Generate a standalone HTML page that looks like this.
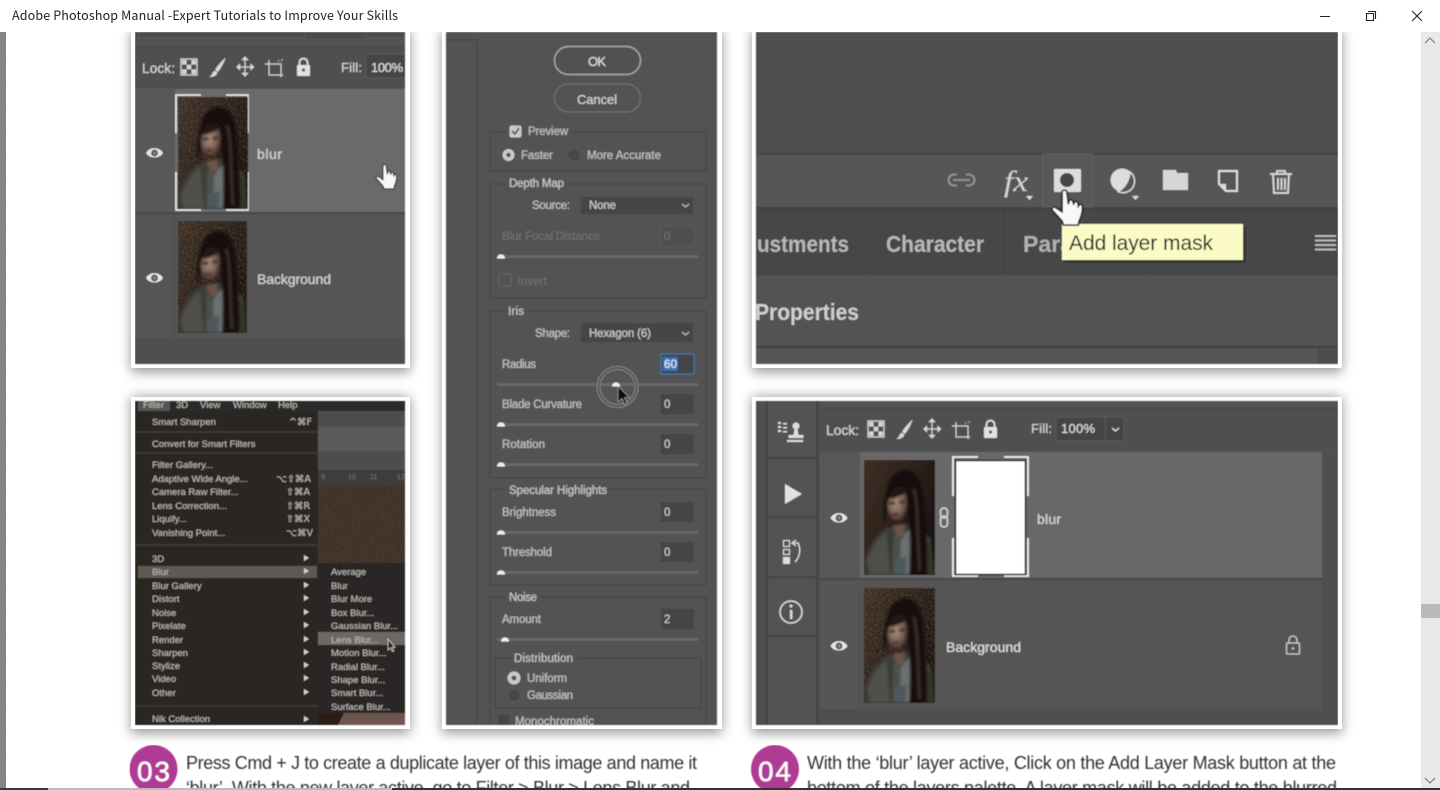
<!DOCTYPE html>
<html><head><meta charset="utf-8"><title>Adobe Photoshop Manual</title>
<style>html,body{margin:0;padding:0;background:#fff;overflow:hidden}svg{display:block}
text{font-family:"Liberation Sans",sans-serif}
.w{fill:#d2d2d2;font-size:14px;stroke:#d2d2d2;stroke-width:.25}.s{fill:#bdbdbd;font-size:11.5px;stroke:#bdbdbd;stroke-width:.3}.d{fill:#707070;font-size:11.5px;stroke:#707070;stroke-width:.25}
.m{fill:#bdb8b2;font-size:9.5px;stroke:#bdb8b2;stroke-width:.12}.c{fill:#333;font-size:18px}
</style></head><body>
<svg xmlns="http://www.w3.org/2000/svg" width="1440" height="790" viewBox="0 0 1440 790">
<defs>
<filter id="sh" x="-20%" y="-20%" width="140%" height="140%"><feGaussianBlur stdDeviation="6"/></filter>
<filter id="b" x="0" y="0" width="100%" height="100%"><feGaussianBlur stdDeviation="0.5"/></filter>
<filter id="pb" x="-10%" y="-10%" width="120%" height="120%"><feGaussianBlur stdDeviation="1.4"/></filter>
<filter id="noise" x="0" y="0" width="100%" height="100%"><feTurbulence type="fractalNoise" baseFrequency="0.6" numOctaves="2" seed="4"/><feColorMatrix values="0 0 0 0 .42  0 0 0 0 .34  0 0 0 0 .26  1.8 0 0 0 -.85"/></filter>
<pattern id="hatch" width="3" height="3" patternUnits="userSpaceOnUse"><rect width="3" height="3" fill="#8e8e8e"/><path d="M0 3L3 0" stroke="#777" stroke-width="1"/></pattern>
<clipPath id="c1"><rect x="135" y="32" width="270" height="332"/></clipPath>
<clipPath id="c2"><rect x="135" y="401" width="270" height="324"/></clipPath>
<clipPath id="c3"><rect x="446" y="32" width="271" height="693"/></clipPath>
<clipPath id="c4"><rect x="756" y="32" width="582" height="332"/></clipPath>
<clipPath id="c5"><rect x="756" y="401" width="582" height="324"/></clipPath>
<clipPath id="tc"><rect x="0" y="0" width="70" height="112"/></clipPath>
<linearGradient id="bgg" x1="0" y1="0" x2="1" y2="0.7"><stop offset="0" stop-color="#3f3025"/><stop offset=".6" stop-color="#2a1f19"/><stop offset="1" stop-color="#191210"/></linearGradient>
<radialGradient id="face" cx=".42" cy=".42" r=".62"><stop offset="0" stop-color="#ad9082"/><stop offset=".6" stop-color="#7c6256"/><stop offset="1" stop-color="#3e2d27"/></radialGradient>
<g id="fig"><g filter="url(#pb)">
<path d="M0 98C4 84 12 72 22 66L46 62 66 76 70 112H0z" fill="#3b3a36"/>
<path d="M3 98C8 86 14 76 22 70L26 112H6z" fill="#4f4f49"/>
<path d="M28 64L40 62 40 74 33 76z" fill="#6a5348"/>
<path d="M29 72L38 80 40 112H28z" fill="#4a4f4e"/>
<path d="M36 78L46 66 48 86 44 112H36z" fill="#6a7170"/>
<path d="M30 98L42 94 41 112H30z" fill="#4d585c"/>
<path d="M56 78L66 82 70 112H58z" fill="#36302c"/>
<path d="M22 32C24 16 33 9 43 10 54 12 58 24 59 40 60 60 63 80 62 112H45C45 92 46 76 44 60L42 34 24 46 20 62C18 50 20 40 22 32z" fill="#181010"/>
<path d="M49 28C54 44 52 72 55 108" stroke="#3e2d2a" stroke-width="2.500" fill="none"/>
<path d="M24 40C27 28 37 26 41 31 44 40 43 51 37 58 31 61 26 57 24 50 23 47 23 43 24 40z" fill="url(#face)"/>
<path d="M24 37C28 26 37 22 42 30L38 34 28 38z" fill="#231816"/>
<ellipse cx="28" cy="42" rx="3.500" ry="1.600" fill="#281b18"/><ellipse cx="37" cy="41" rx="3" ry="1.600" fill="#281b18"/>
<ellipse cx="31" cy="53" rx="4" ry="1.700" fill="#5f2f2e"/>
</g></g>
<g id="port" clip-path="url(#tc)"><rect width="70" height="112" fill="url(#bgg)"/><use href="#fig"/></g>
<g id="portn" clip-path="url(#tc)"><rect width="70" height="112" fill="url(#bgg)"/><rect width="70" height="112" filter="url(#noise)" opacity=".5"/><use href="#fig"/><rect width="70" height="112" filter="url(#noise)" opacity=".12"/></g>
<g id="eye"><path d="M-8.5 0C-5 -6.5 5 -6.5 8.5 0 5 6 -5 6 -8.5 0z" fill="#e6e6e6"/><circle r="3.4" fill="#4a4a4a"/><circle r="1.6" fill="#8a8a8a"/></g>
<path id="hand" d="M8 3c0-2 3-2 3.3 0l1 8.5.3-2c.4-1.5 2.7-1.3 2.8.3l.3 2 .4-1.3c.5-1.3 2.5-1 2.6.5l.2 2 .5-.8c.6-1 2.3-.5 2.3 1 0 4-.6 7-2.3 10.3l-.5 3H9l-1-3L1.6 16c-1-1.3.5-3 2-2.2L8 17z" fill="#f8f8f8" stroke="#1d1d1d" stroke-width="1.1"/>
<g id="lockrow">
<g fill="#d4d4d4"><rect x="0" y="0" width="16" height="16" fill="none" stroke="#d4d4d4" stroke-width="1.3"/><rect x="1" y="1" width="4.6" height="4.6"/><rect x="10.4" y="1" width="4.6" height="4.6"/><rect x="5.7" y="5.7" width="4.6" height="4.6"/><rect x="1" y="10.4" width="4.6" height="4.6"/><rect x="10.4" y="10.4" width="4.6" height="4.6"/></g>
<path d="M44 -1C40 3 36 7 34 11L37 13C40 9 43 4 44.5 -1z" fill="#d8d8d8"/><path d="M33 12C35 12 37 13 36 15 34 18 30 18 28 18 31 17 31 14 33 12z" fill="#d8d8d8"/>
<path d="M64 -2V17M56.5 8H72M64 -2l-2.4 2.6h4.8zM64 17l-2.4-2.6h4.8zM56 8l2.6-2.4v4.8zM72.5 8l-2.6-2.4v4.8z" stroke="#d4d4d4" stroke-width="1.2" fill="#d4d4d4"/>
<path d="M88 1V16H102M84 5H100V18" stroke="#d4d4d4" stroke-width="1.2" fill="none"/><path d="M100 2l2-2M97 3l1-2" stroke="#aaa"/>
<rect x="116" y="6" width="13" height="11" rx="1" fill="#e2e2e2"/><path d="M118.5 6V3.5a4 4 0 0 1 8 0V6" stroke="#e2e2e2" stroke-width="1.8" fill="none"/><circle cx="122.5" cy="11" r="1.6" fill="#555"/>
</g>
<g id="knob"><path d="M-4 2.5C-4 -3 4 -3 4 2.5z" fill="#eee"/></g>
</defs>

<rect width="1440" height="790" fill="#fff"/>

<g fill="#000" opacity=".42" filter="url(#sh)">
<rect x="131" y="30" width="279" height="342"/><rect x="131" y="397" width="279" height="336"/>
<rect x="442" y="30" width="280" height="703"/><rect x="752" y="30" width="590" height="342"/><rect x="752" y="397" width="590" height="336"/>
</g>
<g fill="#fff">
<rect x="131" y="30" width="279" height="338"/><rect x="131" y="397" width="279" height="332"/>
<rect x="442" y="30" width="280" height="699"/><rect x="752" y="30" width="590" height="338"/><rect x="752" y="397" width="590" height="332"/>
</g>

<g filter="url(#b)">
<!-- PANEL 1 -->
<g clip-path="url(#c1)">
<rect x="135" y="32" width="270" height="332" fill="#535353"/>
<rect x="135" y="32" width="270" height="6" fill="#4b4b4b"/>
<path d="M139 32v6h165l2-6M366 32v6h40" fill="none" stroke="#5a5a5a"/>
<rect x="135" y="46" width="270" height="1.5" fill="#454545"/>
<rect x="135" y="47" width="270" height="41" fill="#4f4f4f"/>
<text class="w" x="142" y="73" textLength="33" style="font-size:13.5px">Lock:</text>
<use href="#lockrow" transform="translate(181,59)"/>
<text class="w" x="341" y="72" textLength="21" style="font-size:13px">Fill:</text>
<rect x="366" y="54" width="44" height="24" rx="2" fill="#444" stroke="#5c5c5c"/>
<text class="w" x="371" y="72" textLength="32" style="fill:#ddd;font-size:13px">100%</text>
<rect x="135" y="89" width="40" height="123" fill="#585858"/>
<rect x="175" y="89" width="230" height="123" fill="#6a6a6a"/>
<rect x="135" y="212" width="270" height="2" fill="#474747"/>
<rect x="135" y="214" width="40" height="124" fill="#555"/><rect x="174" y="214" width="1" height="124" fill="#4c4c4c"/>
<rect x="175" y="214" width="230" height="124" fill="#545454"/>
<rect x="135" y="338" width="270" height="26" fill="#4f4f4f"/>
<use href="#eye" transform="translate(154.5,153)"/><use href="#eye" transform="translate(154.5,278)"/>
<path d="M176 133V95H201M226 95H248V133M248 172V210H226M201 210H176V172" fill="none" stroke="#f2f2f2" stroke-width="1.6"/>
<use href="#portn" transform="translate(178,97)"/>
<use href="#portn" transform="translate(178,221) scale(.985,1)"/>
<text class="w" x="257" y="159" textLength="25">blur</text>
<text class="w" x="257" y="284" textLength="74">Background</text>
<use href="#hand" transform="translate(375,163) scale(1,.98)"/>
</g>

<!-- PANEL 2 -->
<g clip-path="url(#c2)">
<rect x="135" y="401" width="270" height="324" fill="#2a2522"/>
<rect x="135" y="401" width="270" height="10" fill="#2a2a2a"/>
<rect x="138" y="401" width="32" height="10" fill="#555"/>
<text class="m" x="143" y="408">Filter</text><text class="m" x="176" y="408">3D</text><text class="m" x="200" y="408">View</text><text class="m" x="233" y="408">Window</text><text class="m" x="278" y="408">Help</text>
<rect x="318" y="411" width="87" height="16" fill="#4e4e4e"/><rect x="318" y="427" width="87" height="24" fill="#5a5a5a"/><rect x="318" y="451" width="87" height="19" fill="#4e4e4e"/>
<rect x="318" y="470" width="87" height="15" fill="#3c3c3c"/>
<rect x="318" y="485" width="87" height="78" fill="#3f3128"/><rect x="318" y="485" width="87" height="78" filter="url(#noise)" opacity=".3"/>
<text x="321" y="479" fill="#777" font-size="7">9</text><text x="348" y="479" fill="#777" font-size="7">10</text><text x="370" y="479" fill="#777" font-size="7">11</text><text x="397" y="479" fill="#777" font-size="7">12</text>
<rect x="318" y="563" width="87" height="150" fill="#2c2725"/>
<rect x="318" y="713" width="87" height="12" fill="#6d574d"/><path d="M318 713h26l-6 12h-20z" fill="#2a1c19"/>
<rect x="135" y="431" width="183" height="2" fill="#3d3936"/><rect x="135" y="452" width="183" height="2" fill="#3d3936"/><rect x="135" y="544" width="183" height="2" fill="#3d3936"/><rect x="135" y="705" width="183" height="2" fill="#3d3936"/>
<rect x="138" y="566" width="179" height="12" fill="#5f5853"/>
<rect x="318" y="632" width="87" height="13" fill="#6e6864"/>
<text class="m" x="152" y="425">Smart Sharpen</text><text class="m" x="289" y="425" style="font-family:'DejaVu Sans',sans-serif">^⌘F</text>
<text class="m" x="152" y="447">Convert for Smart Filters</text>
<text class="m" x="152" y="468">Filter Gallery...</text>
<text class="m" x="152" y="482">Adaptive Wide Angle...</text><text class="m" x="276" y="482" style="font-family:'DejaVu Sans',sans-serif">⌥⇧⌘A</text>
<text class="m" x="152" y="495">Camera Raw Filter...</text><text class="m" x="286" y="495" style="font-family:'DejaVu Sans',sans-serif">⇧⌘A</text>
<text class="m" x="152" y="509">Lens Correction...</text><text class="m" x="286" y="509" style="font-family:'DejaVu Sans',sans-serif">⇧⌘R</text>
<text class="m" x="152" y="522">Liquify...</text><text class="m" x="286" y="522" style="font-family:'DejaVu Sans',sans-serif">⇧⌘X</text>
<text class="m" x="152" y="536">Vanishing Point...</text><text class="m" x="286" y="536" style="font-family:'DejaVu Sans',sans-serif">⌥⌘V</text>
<text class="m" x="152" y="562">3D</text><text class="m" x="152" y="575">Blur</text><text class="m" x="152" y="589">Blur Gallery</text><text class="m" x="152" y="602">Distort</text><text class="m" x="152" y="616">Noise</text><text class="m" x="152" y="629">Pixelate</text><text class="m" x="152" y="643">Render</text><text class="m" x="152" y="656">Sharpen</text><text class="m" x="152" y="669">Stylize</text><text class="m" x="152" y="682">Video</text><text class="m" x="152" y="696">Other</text><text class="m" x="152" y="722">Nik Collection</text>
<path fill="#d5d0cb" d="M304 555l5 3-5 3zM304 568l5 3-5 3zM304 582l5 3-5 3zM304 595l5 3-5 3zM304 609l5 3-5 3zM304 622l5 3-5 3zM304 636l5 3-5 3zM304 649l5 3-5 3zM304 662l5 3-5 3zM304 675l5 3-5 3zM304 689l5 3-5 3zM304 716l5 3-5 3z"/>
<text class="m" x="331" y="575">Average</text><text class="m" x="331" y="589">Blur</text><text class="m" x="331" y="602">Blur More</text><text class="m" x="331" y="616">Box Blur...</text><text class="m" x="331" y="629">Gaussian Blur...</text><text class="m" x="331" y="643">Lens Blur...</text><text class="m" x="331" y="656">Motion Blur...</text><text class="m" x="331" y="670">Radial Blur...</text><text class="m" x="331" y="683">Shape Blur...</text><text class="m" x="331" y="696">Smart Blur...</text><text class="m" x="331" y="710">Surface Blur...</text>
<path d="M388 639v11l2.5-2 2 3.5 1.5-.8-2-3.4h3z" fill="#222" stroke="#ddd" stroke-width=".7"/>
</g>

<!-- PANEL 3 -->
<g clip-path="url(#c3)">
<rect x="446" y="32" width="271" height="693" fill="#525252"/>
<path d="M446 40H477V725" fill="none" stroke="#484848" stroke-width="1.5"/>
<rect x="554.5" y="46.5" width="86" height="28" rx="14" fill="#515151" stroke="#aaa" stroke-width="1.4"/>
<text class="w" x="588" y="66" textLength="18" style="font-size:13px;fill:#ddd">OK</text>
<rect x="554.5" y="84" width="86" height="28" rx="14" fill="none" stroke="#6e6e6e" stroke-width="1.4"/>
<text class="w" x="577" y="104" textLength="40" style="font-size:13px;fill:#d0d0d0">Cancel</text>
<g fill="none" stroke="#474747" stroke-width="1.2">
<rect x="490" y="132" width="216" height="39"/><rect x="490" y="184" width="216" height="114"/><rect x="490" y="311" width="216" height="167"/><rect x="490" y="489" width="216" height="96"/><rect x="490" y="597" width="216" height="130"/><rect x="495" y="658" width="206" height="50"/>
</g>
<g fill="#525252"><rect x="506" y="128" width="66" height="8"/><rect x="506" y="180" width="62" height="8"/><rect x="506" y="307" width="24" height="8"/><rect x="506" y="485" width="104" height="8"/><rect x="506" y="593" width="34" height="8"/><rect x="512" y="654" width="66" height="8"/></g>
<rect x="509.500" y="125.500" width="12" height="12" rx="2" fill="#c9c9c9"/><path d="M512 131l3 3 4-6" stroke="#555" stroke-width="1.6" fill="none"/>
<text class="s" x="528" y="135" textLength="40">Preview</text>
<circle cx="508.500" cy="155" r="6" fill="#c9c9c9"/><circle cx="508.500" cy="155" r="2.2" fill="#555"/>
<text class="s" x="521" y="159" textLength="32">Faster</text>
<circle cx="574" cy="155" r="6.500" fill="#474747" stroke="#5c5c5c"/>
<text class="s" x="587" y="159" textLength="74">More Accurate</text>
<text class="s" x="509" y="187" textLength="55" style="fill:#c9c9c9">Depth Map</text>
<text class="s" x="532" y="209" textLength="38">Source:</text>
<rect x="581" y="197" width="112" height="17" fill="#444"/><text class="s" x="589" y="209" textLength="27" style="fill:#ccc">None</text><path d="M682 204l3.500 3 3.500-3" stroke="#bbb" fill="none" stroke-width="1.2"/>
<text class="d" x="502" y="240" textLength="98">Blur Focal Distance</text>
<rect x="661" y="226" width="33" height="20" fill="#505050" stroke="#5a5a5a"/><text class="d" x="664" y="240">0</text>
<rect x="499" y="274" width="12" height="12" rx="2" fill="none" stroke="#666"/><text class="d" x="517" y="285" textLength="30">Invert</text>
<text class="s" x="508" y="315" textLength="16" style="fill:#c9c9c9">Iris</text>
<text class="s" x="535" y="337" textLength="35">Shape:</text>
<rect x="581" y="323" width="112" height="19" fill="#444"/><text class="s" x="589" y="337" textLength="62" style="fill:#ccc">Hexagon (6)</text><path d="M682 332l3.500 3 3.500-3" stroke="#bbb" fill="none" stroke-width="1.2"/>
<text class="s" x="502" y="368" textLength="34">Radius</text>
<rect x="661" y="354" width="33" height="20" fill="#444" stroke="#3b78b8" stroke-width="1.3"/><rect x="663" y="357" width="15" height="14" fill="#3a73b5"/><text class="s" x="664" y="368" style="fill:#dfe8f2;stroke:#dfe8f2" textLength="13">60</text>
<text class="s" x="502" y="408" textLength="80">Blade Curvature</text>
<rect x="661" y="394" width="33" height="20" fill="#444"/><text class="s" x="664" y="408" style="fill:#ccc">0</text>
<text class="s" x="502" y="448" textLength="43">Rotation</text>
<rect x="661" y="434" width="33" height="20" fill="#444"/><text class="s" x="664" y="448" style="fill:#ccc">0</text>
<text class="s" x="509" y="494" textLength="98" style="fill:#c9c9c9">Specular Highlights</text>
<text class="s" x="502" y="516" textLength="54">Brightness</text>
<rect x="661" y="502" width="33" height="20" fill="#444"/><text class="s" x="664" y="516" style="fill:#ccc">0</text>
<text class="s" x="502" y="556" textLength="50">Threshold</text>
<rect x="661" y="542" width="33" height="20" fill="#444"/><text class="s" x="664" y="556" style="fill:#ccc">0</text>
<text class="s" x="509" y="601" textLength="28" style="fill:#c9c9c9">Noise</text>
<text class="s" x="502" y="623" textLength="39">Amount</text>
<rect x="661" y="609" width="33" height="20" fill="#444"/><text class="s" x="664" y="623" style="fill:#ccc">2</text>
<g stroke="#686868" stroke-width="3"><path d="M497 256.500H698M497 384.500H698M497 424.500H698M497 464.500H698M497 532.500H698M497 572.500H698M497 639.500H698"/></g>
<use href="#knob" transform="translate(501,256)"/><use href="#knob" transform="translate(501,424)"/><use href="#knob" transform="translate(501,464)"/><use href="#knob" transform="translate(501,532)"/><use href="#knob" transform="translate(501,572)"/><use href="#knob" transform="translate(505,639)"/>
<circle cx="617.500" cy="387" r="17.500" fill="#555" stroke="#8a8a8a" stroke-width="1"/><circle cx="617.500" cy="387" r="20.500" fill="none" stroke="#8a8a8a" stroke-width="1"/>
<rect x="597" y="383" width="41" height="3" fill="#6a6a6a"/>
<use href="#knob" transform="translate(616,384)"/>
<path d="M618 386v16l4-3.500 2.500 6 2.500-1-2.500-6h5z" fill="#111" stroke="#ccc" stroke-width=".5"/>
<text class="s" x="514" y="662" textLength="59" style="fill:#c9c9c9">Distribution</text>
<circle cx="514" cy="678" r="6.500" fill="#c9c9c9"/><circle cx="514" cy="678" r="2.400" fill="#555"/>
<text class="s" x="527" y="682" textLength="40">Uniform</text>
<circle cx="514" cy="695" r="6.500" fill="#474747" stroke="#5c5c5c"/>
<text class="s" x="527" y="699" textLength="46">Gaussian</text>
<rect x="498" y="715" width="11" height="12" rx="2" fill="#444"/>
<text class="s" x="515" y="725" textLength="79">Monochromatic</text>
</g>

<!-- PANEL 4 -->
<g clip-path="url(#c4)">
<rect x="756" y="32" width="582" height="332" fill="#525252"/>
<rect x="756" y="32" width="582" height="121" fill="#505050"/>
<rect x="756" y="153" width="582" height="2" fill="#454545"/>
<rect x="756" y="155" width="582" height="52" fill="#565656"/>
<rect x="756" y="207" width="582" height="3" fill="#434343"/>
<rect x="756" y="210" width="582" height="63" fill="#474747"/>
<rect x="756" y="273" width="582" height="2" fill="#424242"/>
<rect x="869" y="210" width="1" height="63" fill="#3d3d3d"/><rect x="1004" y="210" width="1" height="63" fill="#3d3d3d"/><rect x="1146" y="210" width="1" height="63" fill="#3d3d3d"/>
<rect x="756" y="346" width="582" height="2" fill="#404040"/><rect x="756" y="348" width="582" height="16" fill="#545454"/><rect x="1318" y="349" width="20" height="15" fill="#4b4b4b"/>
<rect x="1042.500" y="154" width="50" height="53" fill="#595959" stroke="#606060"/>
<path d="M957 174.500h-3a5.500 5.500 0 0 0 0 11h3M966 174.500h3a5.500 5.500 0 0 1 0 11h-3M953 180h17" fill="none" stroke="#989898" stroke-width="1.800"/>
<text x="1004" y="191" style="font-size:30px;font-style:italic;fill:#d4d4d4;font-family:'Liberation Serif',serif" textLength="24" lengthAdjust="spacingAndGlyphs">fx</text>
<path d="M1026 196h7l-3.500 4z" fill="#ddd"/>
<rect x="1054" y="169" width="27" height="23" rx="1" fill="#ddd"/><circle cx="1067" cy="180" r="7" fill="#454545"/>
<circle cx="1122" cy="180" r="11.500" fill="#ddd"/><path d="M1130 172a11.500 11.500 0 0 1-12 19.500c6-3 11-10 12-19.500z" fill="#555" stroke="#ddd" stroke-width="1.5"/>
<path d="M1132 196h7l-3.500 4z" fill="#ddd"/>
<path d="M1163 170h13l1 3h11v17h-25z" fill="#d6d6d6"/>
<path d="M1219 171h18v20h-11l-7-7z" fill="none" stroke="#ddd" stroke-width="2"/><path d="M1219 184h7v7z" fill="#ddd"/>
<path d="M1270 174h22M1277 174v-3h8v3M1273 174l1 19h14l1-19M1278 178v12M1281.500 178v12M1285 178v12" stroke="#ddd" stroke-width="1.800" fill="none"/>
<text class="w" x="757" y="252" textLength="92" lengthAdjust="spacingAndGlyphs" style="font-size:23px;font-weight:bold;fill:#b8b8b8;stroke:none">ustments</text>
<text class="w" x="886" y="252" textLength="98" lengthAdjust="spacingAndGlyphs" style="font-size:23px;font-weight:bold;fill:#b8b8b8;stroke:none">Character</text>
<text class="w" x="1023" y="252" textLength="50" lengthAdjust="spacingAndGlyphs" style="font-size:23px;font-weight:bold;fill:#b0b0b0;stroke:none">Para</text>
<path d="M1315 236h21M1315 240.500h21M1315 245h21M1315 249.500h21" stroke="#c5c5c5" stroke-width="1.800"/>
<text class="w" x="755" y="320" textLength="104" lengthAdjust="spacingAndGlyphs" style="font-size:23px;font-weight:bold;fill:#cfcfcf;stroke:none">Properties</text>
<rect x="1062" y="224" width="181" height="36" fill="#000" opacity=".25" transform="translate(3,3)"/>
<rect x="1062" y="224" width="181" height="36" fill="#fbfbc6"/>
<text x="1069" y="250" textLength="144" style="font-size:21px;fill:#1a1a1a">Add layer mask</text>
<use href="#hand" transform="translate(1050,188) scale(1.500,1.400)"/>
</g>

<!-- PANEL 5 -->
<g clip-path="url(#c5)">
<rect x="756" y="401" width="582" height="324" fill="#535353"/>
<rect x="756" y="401" width="10" height="324" fill="#505050"/>
<rect x="766" y="401" width="2" height="324" fill="#424242"/>
<rect x="768" y="401" width="48" height="324" fill="#525252"/>
<rect x="816" y="401" width="3" height="324" fill="#454545"/>
<g fill="#434343"><rect x="767" y="457" width="49" height="2"/><rect x="767" y="516" width="49" height="2"/><rect x="767" y="576" width="49" height="2"/><rect x="767" y="635" width="49" height="2"/></g>
<rect x="819" y="408" width="519" height="1.500" fill="#454545"/>
<rect x="819" y="409" width="519" height="42" fill="#4f4f4f"/>
<text class="w" x="826" y="435" textLength="33" style="font-size:14px">Lock:</text>
<use href="#lockrow" transform="translate(868,421)"/>
<text class="w" x="1031" y="433" textLength="21" style="font-size:13px">Fill:</text>
<rect x="1056" y="417" width="68" height="24" rx="2" fill="#444" stroke="#5c5c5c"/><rect x="1105" y="417" width="1" height="24" fill="#5c5c5c"/>
<text class="w" x="1061" y="433" textLength="34" style="font-size:13px;fill:#ddd">100%</text>
<path d="M1112 428l3.500 3 3.500-3" stroke="#ddd" fill="none" stroke-width="1.400"/>
<rect x="819" y="452" width="41" height="126" fill="#585858"/>
<rect x="860" y="452" width="462" height="126" fill="#686868"/>
<rect x="819" y="578" width="503" height="2" fill="#474747"/>
<rect x="819" y="580" width="503" height="129" fill="#545454"/>
<rect x="819" y="580" width="41" height="129" fill="#575757"/><rect x="859" y="580" width="1" height="129" fill="#4d4d4d"/>
<rect x="1322" y="452" width="16" height="273" fill="#505050"/><rect x="819" y="709" width="519" height="16" fill="#505050"/>
<use href="#port" transform="translate(864,460) scale(1.014,1.027)"/>
<use href="#portn" transform="translate(864,588) scale(1.014,1.027)"/>
<path d="M953 496V457H978M1004 457H1028V496M1028 538V576H1004M978 576H953V538" fill="none" stroke="#f2f2f2" stroke-width="1.800"/>
<rect x="955.500" y="460.500" width="70" height="114" fill="#fff" stroke="#222" stroke-width="1.500"/>
<text class="w" x="1037" y="524" textLength="24">blur</text>
<text class="w" x="946" y="652" textLength="75" style="fill:#dcdcdc;stroke:#dcdcdc">Background</text>
<use href="#eye" transform="translate(839,518)"/><use href="#eye" transform="translate(839,646)"/>
<g fill="none" stroke="#ccc" stroke-width="1.800"><rect x="940.500" y="508" width="7" height="10" rx="3.500"/><rect x="940.500" y="516" width="7" height="11" rx="3.500"/></g>
<rect x="1286.500" y="643" width="13" height="11" rx="1" fill="none" stroke="#ccc" stroke-width="1.300"/><path d="M1289 643v-3a4 4 0 0 1 8 0v3" stroke="#ccc" stroke-width="1.300" fill="none"/><circle cx="1293" cy="648.500" r="1.200" fill="#ccc"/>
<path d="M778 422h3v2h-3zM778 426h3v2h-3zM778 430h3v2h-3zM783 423h4v1.500h-4zM783 427h4v1.500h-4zM783 431h4v1.500h-4z" fill="#ddd"/>
<circle cx="796" cy="426" r="3.500" fill="#ddd"/><path d="M794.500 429h3l1 6h5v3h-15v-3h5z" fill="#ddd"/><rect x="787" y="440" width="16" height="2" fill="#ddd"/>
<path d="M785 484l17 10-17 10z" fill="#e2e2e2"/>
<g fill="none" stroke="#ddd" stroke-width="1.100"><rect x="783.500" y="540.500" width="6" height="6"/><rect x="783.500" y="549.500" width="6" height="5"/></g><rect x="783" y="557" width="7" height="7" fill="#ddd"/>
<path d="M792 543h7M796 540l-4 3 4 3M798 543c3 6 2 14-3 19" stroke="#ddd" stroke-width="1.300" fill="none"/>
<circle cx="791" cy="612" r="11" fill="none" stroke="#ddd" stroke-width="1.500"/><rect x="790" y="610" width="2.400" height="9" fill="#ddd"/><circle cx="791" cy="606" r="1.500" fill="#ddd"/>
</g>
</g>

<!-- captions -->
<g filter="url(#b)">
<circle cx="153.500" cy="769" r="24" fill="#b03a94"/>
<text x="137" y="781" textLength="33" style="font-size:28px;fill:#fff;stroke:#fff;stroke-width:.4">03</text>
<text class="c" x="186" y="769" textLength="511">Press Cmd + J to create a duplicate layer of this image and name it</text>
<text class="c" x="186" y="794" textLength="504">‘blur’. With the new layer active, go to Filter &gt; Blur &gt; Lens Blur and</text>
<circle cx="775" cy="769" r="24" fill="#b03a94"/>
<text x="758" y="781" textLength="33" style="font-size:28px;fill:#fff;stroke:#fff;stroke-width:.4">04</text>
<text class="c" x="807" y="769" textLength="529">With the ‘blur’ layer active, Click on the Add Layer Mask button at the</text>
<text class="c" x="807" y="794" textLength="530">bottom of the layers palette. A layer mask will be added to the blurred</text>
</g>

<!-- chrome -->
<rect x="0" y="32" width="6" height="756" fill="url(#hatch)"/>
<rect x="0" y="788" width="48" height="2" fill="#3a3a3a"/>
<rect x="48" y="788" width="344" height="2" fill="#bbb"/>
<rect x="392" y="788" width="1048" height="2" fill="#333"/>
<rect x="1421" y="32" width="19" height="756" fill="#e9e9e9"/>
<rect x="1421" y="604" width="19" height="14" fill="#bababa"/>
<path d="M1425 43l5-5 5 5M1425 778l5 5 5-5" stroke="#8a8a8a" stroke-width="1.300" fill="none"/>
<rect x="0" y="0" width="1440" height="32" fill="#fff"/>
<text x="12" y="20" textLength="386" style="font-family:'Noto Sans CJK SC','DejaVu Sans',sans-serif;font-size:12.500px;fill:#222">Adobe Photoshop Manual -Expert Tutorials to Improve Your Skills</text>
<path d="M1320 16.500h10" stroke="#222" stroke-width="1"/>
<path d="M1368 11.500h7.500v7.500M1366.500 13.500h7v7h-7z" fill="none" stroke="#222" stroke-width="1.100"/>
<path d="M1412 11l10 10M1422 11l-10 10" stroke="#222" stroke-width="1.100"/>
</svg>
</body></html>
